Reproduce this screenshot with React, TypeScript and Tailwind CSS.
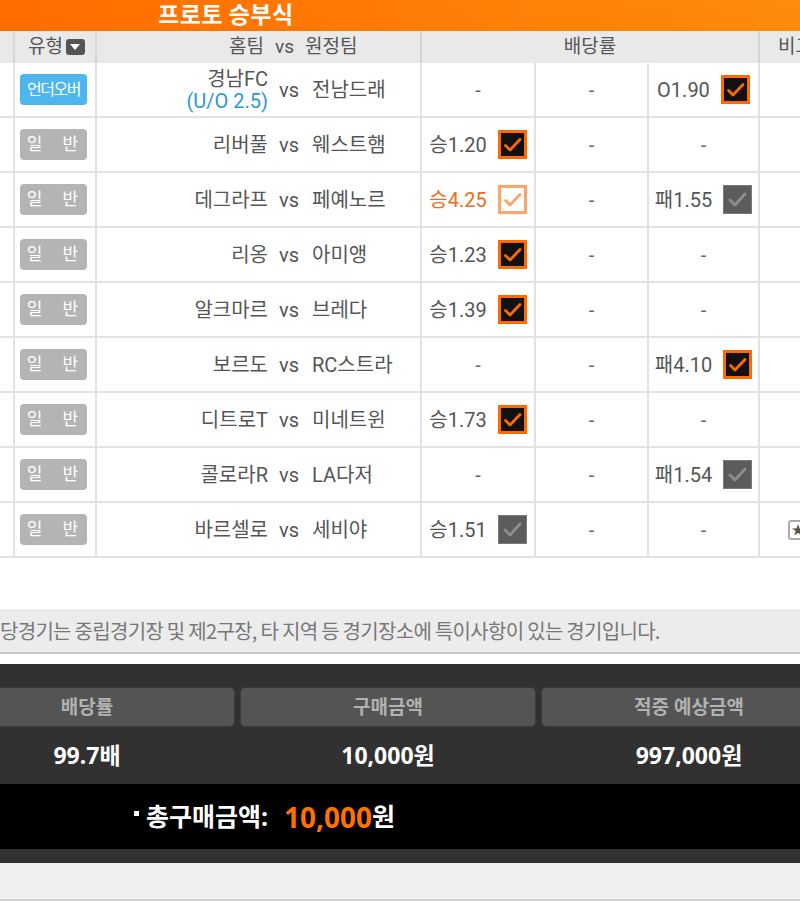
type Box = "on" | "hover" | "off";
type Odd = { label?: string; box?: Box; hot?: boolean };
type Game = { kind: "uo" | "normal"; home: string; sub?: string; away: string; odds: [Odd, Odd, Odd]; star?: boolean };

const games: Game[] = [
  { kind: "uo", home: "경남FC", sub: "(U/O 2.5)", away: "전남드래", odds: [{}, {}, { label: "O1.90", box: "on" }] },
  { kind: "normal", home: "리버풀", away: "웨스트햄", odds: [{ label: "승1.20", box: "on" }, {}, {}] },
  { kind: "normal", home: "데그라프", away: "페예노르", odds: [{ label: "승4.25", box: "hover", hot: true }, {}, { label: "패1.55", box: "off" }] },
  { kind: "normal", home: "리옹", away: "아미앵", odds: [{ label: "승1.23", box: "on" }, {}, {}] },
  { kind: "normal", home: "알크마르", away: "브레다", odds: [{ label: "승1.39", box: "on" }, {}, {}] },
  { kind: "normal", home: "보르도", away: "RC스트라", odds: [{}, {}, { label: "패4.10", box: "on" }] },
  { kind: "normal", home: "디트로T", away: "미네트윈", odds: [{ label: "승1.73", box: "on" }, {}, {}] },
  { kind: "normal", home: "콜로라R", away: "LA다저", odds: [{}, {}, { label: "패1.54", box: "off" }] },
  { kind: "normal", home: "바르셀로", away: "세비야", odds: [{ label: "승1.51", box: "off" }, {}, {}], star: true },
];

function CheckBox({ kind }: { kind: Box }) {
  if (kind === "on") {
    return (
      <div className="w-[29px] h-[29px] shrink-0 bg-[#ff6a00] p-[3px]">
        <div className="w-full h-full bg-[#111]">
          <svg viewBox="0 0 23 23" className="w-full h-full">
            <path d="M4.5 12.5 L9 17 L19 6.5" fill="none" stroke="#ff6a00" strokeWidth="2.8" strokeLinecap="round" strokeLinejoin="round" />
          </svg>
        </div>
      </div>
    );
  }
  if (kind === "hover") {
    return (
      <div className="w-[29px] h-[29px] shrink-0 border-[3px] border-[#f9a66c] bg-white">
        <svg viewBox="0 0 23 23" className="w-full h-full">
          <path d="M4.5 12.5 L9 17 L19 6.5" fill="none" stroke="#f9a66c" strokeWidth="2.8" strokeLinecap="round" strokeLinejoin="round" />
        </svg>
      </div>
    );
  }
  return (
    <div className="w-[29px] h-[29px] shrink-0 bg-[#5c5c5c] border border-[#7a7a7a]">
      <svg viewBox="0 0 27 27" className="w-full h-full">
        <path d="M6 14 L11 19 L21 8" fill="none" stroke="#8e8e8e" strokeWidth="2.8" strokeLinecap="round" strokeLinejoin="round" />
      </svg>
    </div>
  );
}

function OddCell({ odd, w }: { odd: Odd; w: string }) {
  return (
    <div className={`${w} shrink-0 h-full border-r-2 border-[#e2e2e2] flex items-center justify-center gap-[11px]`}>
      {odd.label ? (
        <>
          <span className={odd.hot ? "text-[#f06c16]" : "text-[#555]"}>{odd.label}</span>
          <CheckBox kind={odd.box ?? "on"} />
        </>
      ) : (
        <span className="text-[#666]">-</span>
      )}
    </div>
  );
}

function GameRow({ g }: { g: Game }) {
  return (
    <div className="flex h-[55px] border-b-2 border-[#e2e2e2] text-[20px]">
      <div className="w-[15px] shrink-0 h-full border-r-2 border-[#e2e2e2]" />
      <div className="w-[82px] shrink-0 h-full border-r-2 border-[#e2e2e2] flex items-center pl-[5px]">
        {g.kind === "uo" ? (
          <div className="w-[67px] h-[31px] rounded-[4px] bg-[#4db6ef] text-white text-[16px] tracking-[-1.5px] flex items-center justify-center">
            언더오버
          </div>
        ) : (
          <div className="w-[67px] h-[31px] rounded-[4px] bg-[#b4b4b4] text-white text-[17px] tracking-[8px] flex items-center justify-center pl-[6px]">
            일 반
          </div>
        )}
      </div>
      <div className="w-[325px] shrink-0 h-full border-r-2 border-[#e2e2e2] flex items-center text-[#555]">
        <div className="w-[171px] text-right">
          {g.sub ? (
            <div className="leading-[22px]">
              <div>{g.home}</div>
              <div className="text-[#2a9ad6]">{g.sub}</div>
            </div>
          ) : (
            g.home
          )}
        </div>
        <span className="ml-[11px] mr-[13px]">vs</span>
        <span>{g.away}</span>
      </div>
      <OddCell odd={g.odds[0]} w="w-[114px]" />
      <OddCell odd={g.odds[1]} w="w-[113px]" />
      <OddCell odd={g.odds[2]} w="w-[111px]" />
      <div className="flex-1 min-w-0 overflow-hidden h-full flex items-center pl-[28px]">
        {g.star && (
          <div className="w-[20px] h-[20px] shrink-0 rounded-[3px] border-2 border-[#aaa] bg-white flex items-center justify-center text-[13px] text-[#555] leading-none">
            ★
          </div>
        )}
      </div>
    </div>
  );
}

export default function App() {
  return (
    <div className="w-[800px] h-[904px] overflow-hidden bg-white font-[family-name:Roboto,'Noto_Sans_CJK_KR',sans-serif]">
      {/* orange title bar */}
      <div className="h-[31px] bg-gradient-to-r from-[#ff6c00] to-[#ff8a0c] pl-[158px]">
        <div className="text-white font-bold text-[23px] tracking-[0.5px] leading-[27px] font-[family-name:'Noto_Sans_CJK_KR',sans-serif]">프로토 승부식</div>
      </div>

      {/* table header */}
      <div className="flex h-[32px] bg-[#e9e9e9] text-[19px] text-[#555]">
        <div className="w-[15px] shrink-0 h-full border-r-2 border-[#d6d6d6]" />
        <div className="w-[82px] shrink-0 h-full border-r-2 border-[#d6d6d6] flex items-center pl-[13px] gap-[3px]">
          <span>유형</span>
          <span className="w-[19px] h-[16px] rounded-[3px] bg-[#555] flex items-center justify-center">
            <svg viewBox="0 0 10 6" className="w-[10px] h-[6px]">
              <path d="M0 0 L10 0 L5 6 Z" fill="#fff" />
            </svg>
          </span>
        </div>
        <div className="w-[325px] shrink-0 h-full border-r-2 border-[#d6d6d6] flex items-center">
          <div className="w-[167px] text-right">홈팀</div>
          <span className="ml-[11px] mr-[11px]">vs</span>
          <span>원정팀</span>
        </div>
        <div className="w-[338px] shrink-0 h-full border-r-2 border-[#d6d6d6] flex items-center justify-center">배당률</div>
        <div className="flex-1 min-w-0 overflow-hidden h-full flex items-center pl-[18px] whitespace-nowrap">비고</div>
      </div>

      {games.map((g, i) => (
        <GameRow key={i} g={g} />
      ))}

      {/* notice */}
      <div className="mt-[51px] h-[45px] bg-[#ececec] border-b-2 border-[#c9c9c9] flex items-center whitespace-nowrap text-[20px] tracking-[-0.7px] text-[#777] font-[family-name:'Noto_Sans_CJK_KR',sans-serif]">
        당경기는 중립경기장 및 제2구장, 타 지역 등 경기장소에 특이사항이 있는 경기입니다.
      </div>

      {/* purchase summary */}
      <div className="mt-[10px] bg-[#313131] font-[family-name:'Noto_Sans','Noto_Sans_CJK_KR',sans-serif]">
        <div className="pt-[23px] flex gap-[5px] ml-[-61px] w-[898px]">
          {["배당률", "구매금액", "적중 예상금액"].map((t) => (
            <div key={t} className="w-[296px] h-[40px] rounded-[5px] bg-[#545454] border border-[#3c3c3c] flex items-center justify-center text-[19px] font-bold text-[#b2b2b2]">
              {t}
            </div>
          ))}
        </div>
        <div className="flex gap-[5px] ml-[-61px] w-[898px] h-[57px] items-center text-white font-bold text-[23px]">
          {["99.7배", "10,000원", "997,000원"].map((t) => (
            <div key={t} className="w-[296px] text-center">
              {t}
            </div>
          ))}
        </div>
        <div className="h-[65px] bg-black flex items-center pl-[134px] text-white font-bold text-[25px]">
          <span className="w-[5px] h-[5px] bg-white mr-[7px] mb-[6px]" />
          <span>총구매금액:</span>
          <span className="ml-[16px] text-[#ff7000] text-[28px]">10,000</span>
          <span>원</span>
        </div>
        <div className="h-[14px]" />
      </div>
      <div className="h-[38px] bg-[#f0f0f0] border-b-2 border-[#d0d0d0]" />
    </div>
  );
}
